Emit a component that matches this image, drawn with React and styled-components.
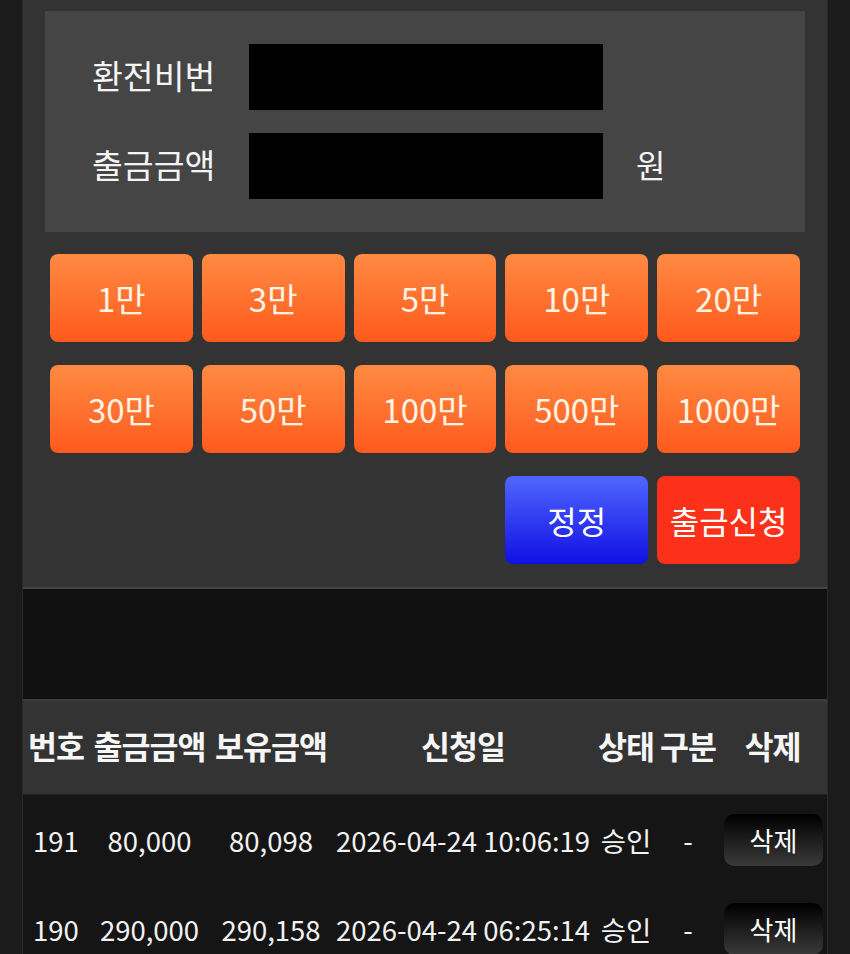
import React from "react";
import styled, { createGlobalStyle } from "styled-components";

const Global = createGlobalStyle`
  html, body { margin: 0; padding: 0; background: #1b1b1b; }
  body { font-family: "Noto Sans CJK KR", "Noto Sans", sans-serif; color: #f2f2f2; }
`;

const Column = styled.div`
  margin-left: 22px;
  width: 804px;
  border-left: 1px solid #2a2a2a;
  border-right: 1px solid #2a2a2a;
  min-height: 954px;
  background: #151515;
`;

const TopSection = styled.section`
  background: #333333;
  padding: 11px 22px 23px;
  border-bottom: 2px solid #454545;
`;

const FormBox = styled.div`
  background: #454545;
  padding: 33px 0 33px 47px;
  display: grid;
  grid-template-columns: 124px 354px auto;
  column-gap: 33px;
  row-gap: 23px;
  align-items: center;
`;

const Label = styled.div`
  font-size: 33.5px;
  line-height: 1;
  color: #f4f4f4;
  white-space: nowrap;
  margin-top: -5px;
`;

const BlackInput = styled.div`
  height: 66px;
  background: #000;
`;

const Unit = styled.div`
  font-size: 32px;
  line-height: 1;
  color: #f4f4f4;
  margin-top: -4px;
`;

const ButtonGrid = styled.div`
  margin: 22px 5px 0;
  display: grid;
  grid-template-columns: repeat(5, 1fr);
  column-gap: 9px;
  row-gap: 23px;
`;

const Btn = styled.div`
  height: 88px;
  border-radius: 8px;
  display: flex;
  align-items: center;
  justify-content: center;
  font-size: ${(p) => (p.$tone === "orange" ? "33px" : "32px")};
  color: ${(p) => (p.$tone === "orange" ? "#fff3e3" : "#ffffff")};
  grid-column: ${(p) => p.$col || "auto"};
  white-space: nowrap;
  background: ${(p) =>
    p.$tone === "blue"
      ? "linear-gradient(to bottom, #5066ff, #1010e4)"
      : p.$tone === "red"
      ? "#fd3019"
      : "linear-gradient(to bottom, #ff8a42, #ff5a1d)"};
`;

const Gap = styled.div`
  height: 110px;
  background: #111111;
`;

const TableWrap = styled.div`
  border-top: 2px solid #3c3c3c;
`;

const Row = styled.div`
  display: grid;
  grid-template-columns: 66px 121px 122px 262px 64px 60px 109px;
  align-items: center;
  height: ${(p) => (p.$head ? "93px" : "89px")};
  background: ${(p) => (p.$head ? "#333333" : "transparent")};
  border-bottom: ${(p) => (p.$head ? "1px solid #222" : "none")};
`;

const Head = styled.div`
  text-align: center;
  font-weight: 700;
  font-size: 31.5px;
  letter-spacing: -1px;
  color: #f6f6f6;
  white-space: nowrap;
  margin-top: -5px;
`;

const Cell = styled.div`
  text-align: center;
  font-size: 27.5px;
  color: #f2f2f2;
  white-space: nowrap;
`;

const DelBtn = styled.div`
  justify-self: center;
  width: 99px;
  height: 52px;
  border-radius: 10px;
  background: linear-gradient(to bottom, #000000, #3a3a3a);
  display: flex;
  align-items: center;
  justify-content: center;
  font-size: 26px;
  color: #fff;
  margin-left: 2px;
`;

const amounts = ["1만", "3만", "5만", "10만", "20만", "30만", "50만", "100만", "500만", "1000만"];

const rows = [
  ["191", "80,000", "80,098", "2026-04-24 10:06:19", "승인", "-"],
  ["190", "290,000", "290,158", "2026-04-24 06:25:14", "승인", "-"],
];

export default function App() {
  return (
    <>
      <Global />
      <Column>
        <TopSection>
          <FormBox>
            <Label>환전비번</Label>
            <BlackInput />
            <span />
            <Label>출금금액</Label>
            <BlackInput />
            <Unit>원</Unit>
          </FormBox>
          <ButtonGrid>
            {amounts.map((a) => (
              <Btn key={a} $tone="orange">{a}</Btn>
            ))}
            <Btn $tone="blue" $col="4">정정</Btn>
            <Btn $tone="red" $col="5">출금신청</Btn>
          </ButtonGrid>
        </TopSection>
        <Gap />
        <TableWrap>
          <Row $head>
            <Head>번호</Head>
            <Head>출금금액</Head>
            <Head>보유금액</Head>
            <Head>신청일</Head>
            <Head>상태</Head>
            <Head>구분</Head>
            <Head>삭제</Head>
          </Row>
          {rows.map((r) => (
            <Row key={r[0]}>
              {r.map((c, i) => (
                <Cell key={i}>{c}</Cell>
              ))}
              <DelBtn>삭제</DelBtn>
            </Row>
          ))}
        </TableWrap>
      </Column>
    </>
  );
}
